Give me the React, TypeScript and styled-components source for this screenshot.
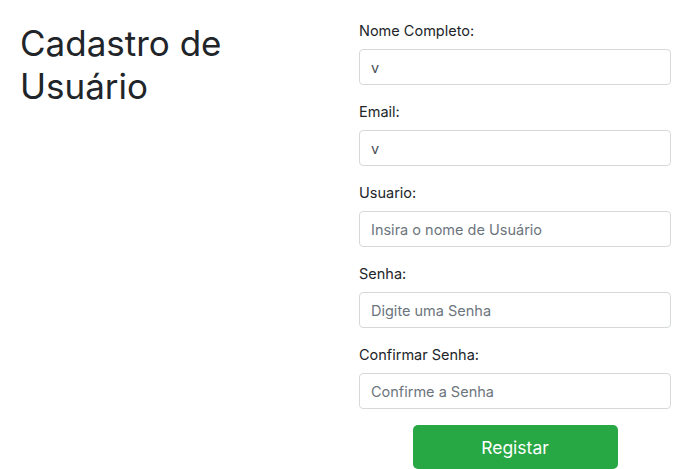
import React from "react";
import styled, { createGlobalStyle } from "styled-components";

const GlobalStyle = createGlobalStyle`
  html, body {
    margin: 0;
    padding: 0;
    background: #ffffff;
  }
  body {
    font-family: Inter, "Noto Sans", "Liberation Sans", sans-serif;
    color: #212529;
  }
  * { box-sizing: border-box; }
`;

const Page = styled.div`
  display: grid;
  grid-template-columns: 1fr 1fr;
  column-gap: 27px;
  padding: 20px 20px 0;
`;

const Title = styled.h1`
  margin: 2px 0 0;
  font-size: 35px;
  line-height: 42.5px;
  font-weight: 400;
  color: #212529;
`;

const Form = styled.form`
  display: flex;
  flex-direction: column;
`;

const Group = styled.div`
  display: flex;
  flex-direction: column;
  margin-bottom: 16px;
`;

const Label = styled.label`
  font-size: 14.5px;
  line-height: 22px;
  margin-bottom: 7px;
  color: #212529;
`;

const Input = styled.input`
  height: 36px;
  width: 100%;
  padding: 0 11px;
  border: 1px solid #d6d9dc;
  border-radius: 4px;
  font-family: inherit;
  font-size: 14.5px;
  color: #495057;
  background: #fff;
  outline: none;
  &::placeholder {
    color: #6c757d;
    opacity: 1;
  }
`;

const Button = styled.button`
  align-self: center;
  width: 205px;
  height: 44px;
  border: none;
  border-radius: 5px;
  background: #28a745;
  color: #ffffff;
  font-family: inherit;
  font-size: 17.5px;
  cursor: pointer;
`;

const fields = [
  { label: "Nome Completo:", value: "v", placeholder: "", type: "text" },
  { label: "Email:", value: "v", placeholder: "", type: "text" },
  { label: "Usuario:", value: "", placeholder: "Insira o nome de Usuário", type: "text" },
  { label: "Senha:", value: "", placeholder: "Digite uma Senha", type: "password" },
  { label: "Confirmar Senha:", value: "", placeholder: "Confirme a Senha", type: "password" },
];

export default function App() {
  return (
    <>
      <GlobalStyle />
      <Page>
        <Title>
          Cadastro de
          <br />
          Usuário
        </Title>
        <Form onSubmit={(e) => e.preventDefault()}>
          {fields.map((f) => (
            <Group key={f.label}>
              <Label>{f.label}</Label>
              <Input type={f.type} defaultValue={f.value} placeholder={f.placeholder} />
            </Group>
          ))}
          <Button type="submit">Registar</Button>
        </Form>
      </Page>
    </>
  );
}
